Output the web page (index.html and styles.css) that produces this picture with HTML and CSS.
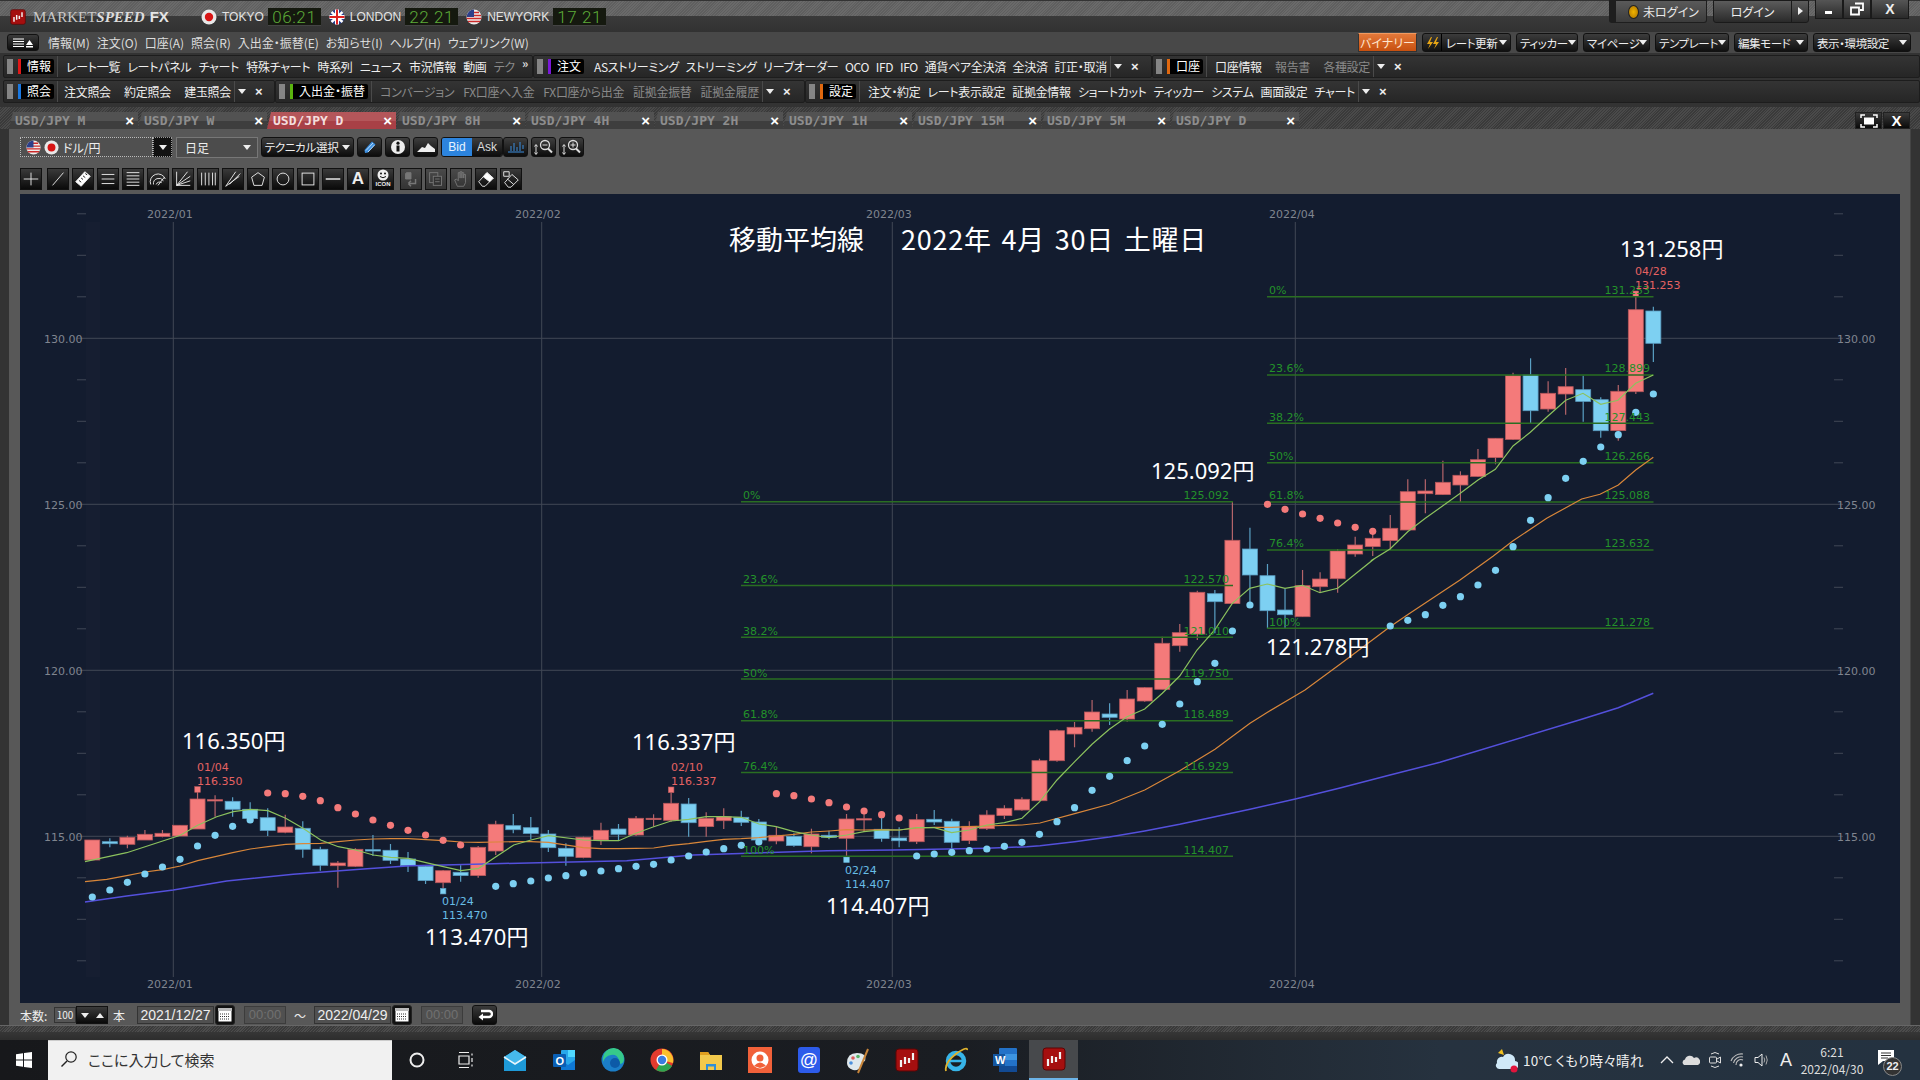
FILE: index.html
```html
<!DOCTYPE html>
<html lang="ja">
<head>
    <meta charset="UTF-8">
    <title>MARKETSPEED FX</title>
    <link rel="stylesheet" href="styles.css">
</head>
<body>
    <svg class="defs" width="0" height="0">
        <symbol id="flag-jp" viewBox="0 0 16 16"><circle cx="8" cy="8" r="7.5" fill="#e8e8e8"/><circle cx="8" cy="8" r="4.2" fill="#d81414"/></symbol>
        <symbol id="flag-uk" viewBox="0 0 16 16"><circle cx="8" cy="8" r="7.5" fill="#27408f"/><path d="M2.5 3L13.5 13M13.5 3L2.5 13" stroke="#fff" stroke-width="2.4"/><path d="M8 0.5V15.5M0.5 8H15.5" stroke="#fff" stroke-width="4"/><path d="M8 0.5V15.5M0.5 8H15.5" stroke="#d22" stroke-width="2"/></symbol>
        <symbol id="flag-us" viewBox="0 0 16 16"><circle cx="8" cy="8" r="7.5" fill="#eee"/><path d="M3 3.5H13M1 6.5H15M0.7 9.5H15.3M2 12.5H14" stroke="#cc2a2a" stroke-width="1.5"/><path d="M8 0.5A7.5 7.5 0 0 0 0.7 8H8Z" fill="#2c3f8a"/></symbol>
        <symbol id="app-logo" viewBox="0 0 24 24"><rect x="1" y="1" width="22" height="22" rx="3" fill="#a50f0f" stroke="#5c0505"/><path d="M6 12V19M10 9V16M14 10V15M18 5V12" stroke="#f2f2f2" stroke-width="2.2"/></symbol>
    </svg>

    <div class="app">
        <header class="titlebar">
            <svg class="brand-logo"><use href="#app-logo"/></svg>
            <div class="brand"><span class="brand-a">MARKET</span><span class="brand-b">SPEED</span><span class="brand-c">FX</span></div>
            <svg class="city-flag first-city"><use href="#flag-jp"/></svg>
            <span class="city">TOKYO</span>
            <span class="clock">06:21</span>
            <svg class="city-flag"><use href="#flag-uk"/></svg>
            <span class="city">LONDON</span>
            <span class="clock">22 21</span>
            <svg class="city-flag"><use href="#flag-us"/></svg>
            <span class="city">NEWYORK</span>
            <span class="clock">17 21</span>

            <div class="title-right">
                <div class="login-state"><span class="lamp"></span>未ログイン</div>
                <div class="login-btn"><span>ログイン</span><i class="login-arrow"></i></div>
                <div class="win-btns">
                    <div class="win-btn"><svg width="14" height="14"><rect x="3" y="9" width="7" height="3" fill="#fff"/></svg></div>
                    <div class="win-btn"><svg width="16" height="14"><path d="M6 1.5H14V8H11M2 5.5H10V12.5H2Z" fill="none" stroke="#fff" stroke-width="1.8"/></svg></div>
                    <div class="win-btn win-close">X</div>
                </div>
            </div>
        </header>

        <nav class="menubar">
            <div class="menu-toggle">
                <svg width="24" height="14"><path d="M2 3H13M2 5.5H13M2 8H13M2 10.5H13" stroke="#fff"/><path d="M15 9L18.5 4L22 9Z M15 10H22V11.5H15Z" fill="#fff"/></svg>
            </div>
            <div class="menu-items">
                <span>情報(M)</span><span>注文(O)</span><span>口座(A)</span><span>照会(R)</span><span>入出金・振替(E)</span><span>お知らせ(I)</span><span>ヘルプ(H)</span><span>ウェブリンク(W)</span>
            </div>
            <div class="menu-right">
                <div class="binary-btn">バイナリー</div>
                <div class="drop-btn rate-btn"><span class="bolt">
                    <svg width="16" height="14"><path d="M7 1L3 8H6L4 13L9 6H6L8 1ZM13 1L9 8H12L10 13L15 6H12L14 1Z" fill="#e8a614"/></svg>
                </span>レート更新</div>
                <div class="drop-btn ticker-btn">ティッカー</div>
                <div class="drop-btn page-btn">マイページ</div>
                <div class="drop-btn tmpl-btn">テンプレート</div>
                <div class="drop-btn edit-btn">編集モード</div>
                <div class="drop-btn env-btn">表示・環境設定</div>
            </div>
        </nav>

        <div class="toolrow">
            <div class="toolbar tb-info">
                <i class="grip"></i><b class="tag tag-red">情報</b><i class="sep"></i>
                <div class="tb-items items-info"><span>レート一覧</span><span>レートパネル</span><span>チャート</span><span>特殊チャート</span><span>時系列</span><span>ニュース</span><span>市況情報</span><span>動画</span><span class="off">テク</span></div>
                <span class="more">»</span>
            </div>
            <div class="toolbar tb-order">
                <i class="grip"></i><b class="tag tag-purple">注文</b>
                <div class="tb-items items-order"><span>ASストリーミング</span><span>ストリーミング</span><span>リーブオーダー</span><span>OCO</span><span>IFD</span><span>IFO</span><span>通貨ペア全決済</span><span>全決済</span><span>訂正・取消</span></div>
                <i class="sep"></i><i class="caret"></i><span class="x">×</span>
            </div>
            <div class="toolbar tb-grow">
                <i class="grip"></i><b class="tag tag-orange">口座</b><i class="sep"></i>
                <div class="tb-items items-acct"><span>口座情報</span><span class="off">報告書</span><span class="off">各種設定</span></div>
                <i class="sep"></i><i class="caret"></i><span class="x">×</span>
            </div>
        </div>

        <div class="toolrow">
            <div class="toolbar tb-inquiry">
                <i class="grip"></i><b class="tag tag-blue">照会</b><i class="sep"></i>
                <div class="tb-items items-inquiry"><span>注文照会</span><span>約定照会</span><span>建玉照会</span></div>
                <i class="sep"></i><i class="caret"></i><span class="x">×</span>
            </div>
            <div class="toolbar tb-deposit">
                <i class="grip"></i><b class="tag tag-green">入出金・振替</b><i class="sep"></i>
                <div class="tb-items items-deposit off"><span>コンバージョン</span><span>FX口座へ入金</span><span>FX口座から出金</span><span>証拠金振替</span><span>証拠金履歴</span></div>
                <i class="sep"></i><i class="caret"></i><span class="x">×</span>
            </div>
            <div class="toolbar tb-grow">
                <i class="grip"></i><b class="tag tag-orange">設定</b><i class="sep"></i>
                <div class="tb-items items-setting"><span>注文・約定</span><span>レート表示設定</span><span>証拠金情報</span><span>ショートカット</span><span>ティッカー</span><span>システム</span><span>画面設定</span><span>チャート</span></div>
                <i class="sep"></i><i class="caret"></i><span class="x">×</span>
            </div>
        </div>

        <div class="tabstrip">
            <div class="tab"><span>USD/JPY M</span><b>×</b></div>
            <div class="tab"><span>USD/JPY W</span><b>×</b></div>
            <div class="tab tab-active"><span>USD/JPY D</span><b>×</b></div>
            <div class="tab"><span>USD/JPY 8H</span><b>×</b></div>
            <div class="tab"><span>USD/JPY 4H</span><b>×</b></div>
            <div class="tab"><span>USD/JPY 2H</span><b>×</b></div>
            <div class="tab"><span>USD/JPY 1H</span><b>×</b></div>
            <div class="tab"><span>USD/JPY 15M</span><b>×</b></div>
            <div class="tab"><span>USD/JPY 5M</span><b>×</b></div>
            <div class="tab"><span>USD/JPY D</span><b>×</b></div>
            <div class="strip-btns">
                <div class="strip-btn"><svg width="18" height="14"><path d="M1 4V1H5M13 1H17V4M17 10V13H13M5 13H1V10" fill="none" stroke="#fff" stroke-width="1.5"/><rect x="4" y="3.5" width="10" height="7" fill="#fff"/></svg></div>
                <div class="strip-btn strip-close">X</div>
            </div>
        </div>

        <main class="panel">
            <div class="chart-controls">
                <div class="pair-select">
                    <svg class="pair-flag"><use href="#flag-us"/></svg><svg class="pair-flag"><use href="#flag-jp"/></svg>
                    <span>ドル/円</span>
                </div>
                <div class="pair-drop"><i class="caret"></i></div>
                <div class="span-select"><span>日足</span><i class="caret"></i></div>
                <div class="ctrl-btn tech-btn">テクニカル選択<i class="caret"></i></div>
                <div class="ctrl-btn icon-btn"><svg width="18" height="16"><path d="M4 14L3.5 11L11 2.5L14.5 5.5L7 13.5Z" fill="#3d8fe0"/><path d="M5 11.5L12 4M7 13L13.5 6" stroke="#bcdcf5"/></svg></div>
                <div class="ctrl-btn icon-btn"><svg width="16" height="16"><circle cx="8" cy="8" r="7" fill="#eee"/><rect x="6.5" y="6.5" width="3" height="6" fill="#111"/><circle cx="8" cy="4.2" r="1.6" fill="#111"/></svg></div>
                <div class="ctrl-btn icon-btn"><svg width="20" height="14"><path d="M1 12L6 7L9 8L12 3L15 6L19 9V12Z" fill="#eee"/></svg></div>
                <div class="bidask"><span class="bid">Bid</span><span class="ask">Ask</span></div>
                <div class="ctrl-btn icon-btn chart-type"><svg width="18" height="14"><path d="M1 12H17M4 11V6M7 11V3M10 11V7M13 11V2M16 9V5" stroke="#3d8fe0"/></svg></div>
                <div class="ctrl-btn icon-btn"><svg width="22" height="18"><path d="M3 7V16M1.5 8.5L3 6.5L4.5 8.5M1.5 14.5L3 16.5L4.5 14.5" stroke="#ddd" fill="none"/><circle cx="12" cy="7" r="4.5" fill="none" stroke="#ddd" stroke-width="1.3"/><path d="M15 10.5L19 14.5" stroke="#ddd" stroke-width="2"/><path d="M9.5 7H14.5" stroke="#ddd"/></svg></div>
                <div class="ctrl-btn icon-btn"><svg width="22" height="18"><path d="M3 7V16M1.5 8.5L3 6.5L4.5 8.5M1.5 14.5L3 16.5L4.5 14.5" stroke="#ddd" fill="none"/><circle cx="12" cy="7" r="4.5" fill="none" stroke="#ddd" stroke-width="1.3"/><path d="M15 10.5L19 14.5" stroke="#ddd" stroke-width="2"/><path d="M9.5 7H14.5M12 4.5V9.5" stroke="#ddd"/></svg></div>
            </div>

            <div class="draw-tools">
                <div class="tool tool-first"><svg class="ico" viewBox="0 0 22 22"><path d="M11 4V18M3 11H19"/></svg></div>
                <div class="tool"><svg class="ico" viewBox="0 0 22 22"><path d="M5 18L17 4"/></svg></div>
                <div class="tool"><svg class="ico" viewBox="0 0 22 22"><path d="M3 14L13 3L19 8L9 19Z" fill="#fff"/><path d="M6.5 12.5L9 14.5M9 10L11 11.5M11 7.5L13.5 9.5M13.5 5L15.5 6.5" stroke="#111"/></svg></div>
                <div class="tool"><svg class="ico" viewBox="0 0 22 22"><path d="M4 6H18M4 11H18M4 16H18"/></svg></div>
                <div class="tool"><svg class="ico" viewBox="0 0 22 22"><path d="M4 4H18M4 7.5H18M4 11H18M4 14.5H18M4 18H18"/></svg></div>
                <div class="tool"><svg class="ico" viewBox="0 0 22 22"><path d="M3 17A8 8 0 0 1 19 11M6 17A6 6 0 0 1 17 13M9 17A4 4 0 0 1 15 15M11 18L18 9"/></svg></div>
                <div class="tool"><svg class="ico" viewBox="0 0 22 22"><path d="M4 3V18H19M4 18L16 3M4 18L19 8M4 18L19 13"/></svg></div>
                <div class="tool"><svg class="ico" viewBox="0 0 22 22"><path d="M4 4V18M8 4V18M12 4V18M16 4V18M19 4V18"/></svg></div>
                <div class="tool"><svg class="ico" viewBox="0 0 22 22"><path d="M3 19L14 3M3 19L18 8M7 17L19 5"/></svg></div>
                <div class="tool"><svg class="ico" viewBox="0 0 22 22"><path d="M11 4L18 9L15.5 18H6.5L4 9Z"/></svg></div>
                <div class="tool"><svg class="ico" viewBox="0 0 22 22"><circle cx="11" cy="11" r="6.5"/></svg></div>
                <div class="tool"><svg class="ico" viewBox="0 0 22 22"><rect x="4.5" y="4.5" width="13" height="13"/></svg></div>
                <div class="tool"><svg class="ico" viewBox="0 0 22 22"><path d="M3 11H19" stroke-width="1.6"/></svg></div>
                <div class="tool tool-letter">A</div>
                <div class="tool tool-smile"><svg width="14" height="12" viewBox="0 0 14 12"><circle cx="7" cy="6" r="5.5" fill="#eee"/><circle cx="5" cy="4.5" r="1" fill="#111"/><circle cx="9" cy="4.5" r="1" fill="#111"/><path d="M4 7.5Q7 10 10 7.5" stroke="#111" fill="none"/></svg><span>ICON</span></div>
                <div class="tool tool-gap tool-off"><svg class="ico" viewBox="0 0 22 22"><path d="M6 4H11V11H5V5Z" fill="#777"/><path d="M16 11V16H8M8 16L11 13M8 16L11 19" stroke="#777" stroke-width="1.6"/></svg></div>
                <div class="tool tool-off"><svg class="ico" viewBox="0 0 22 22"><rect x="4" y="4" width="9" height="11"/><rect x="8" y="8" width="9" height="10" fill="#333"/><path d="M10 11H15M10 14H15"/></svg></div>
                <div class="tool tool-off"><svg class="ico" viewBox="0 0 22 22"><path d="M7 19L4 12L6 11L8 13V4H10V10V3H12V10V4H14V10V6H16V15L14 19Z"/></svg></div>
                <div class="tool"><svg class="ico" viewBox="0 0 22 22"><path d="M3 14L12 4L19 10L10 19H7Z"/><path d="M12 4L19 10L15 14L8 8.5Z" fill="#fff"/></svg></div>
                <div class="tool"><svg class="ico" viewBox="0 0 22 22"><path d="M4 15L12 6L19 12L11 20H8Z"/><path d="M3 3H9V8H3Z"/><path d="M7 11L14 17"/></svg></div>
            </div>

            <div class="plot">
                <svg class="chart" width="1880" height="809" viewBox="20 194 1880 809">
                    <rect class="axis-band" x="86" y="222" width="14" height="755"/>
                    <g id="grid"></g>

                    <g class="axis-text">
                        <text x="44" y="343">130.00</text><text x="44" y="509">125.00</text><text x="44" y="675">120.00</text><text x="44" y="841">115.00</text>
                        <text x="1837" y="343">130.00</text><text x="1837" y="509">125.00</text><text x="1837" y="675">120.00</text><text x="1837" y="841">115.00</text>
                        <text x="147" y="218">2022/01</text><text x="515" y="218">2022/02</text><text x="866" y="218">2022/03</text><text x="1269" y="218">2022/04</text>
                        <text x="147" y="988">2022/01</text><text x="515" y="988">2022/02</text><text x="866" y="988">2022/03</text><text x="1269" y="988">2022/04</text>
                    </g>

                    <g id="candles"></g>

                    <g class="fib-lines">
                        <path d="M741 501.7H1233M741 585.4H1233M741 637.2H1233M741 679H1233M741 720.8H1233M741 772.6H1233M741 856.3H1233"/>
                        <path d="M1267 296.7H1653.5M1267 375H1653.5M1267 423.3H1653.5M1267 462.7H1653.5M1267 502H1653.5M1267 550H1653.5M1267 628.3H1653.5"/>
                    </g>

                    <g id="averages"></g>
                    <g id="sar"></g>

                    <g class="fib-text">
                        <text x="743" y="499">0%</text><text x="743" y="583">23.6%</text><text x="743" y="635">38.2%</text><text x="743" y="677">50%</text><text x="743" y="718">61.8%</text><text x="743" y="770">76.4%</text><text x="743" y="854">100%</text>
                        <text x="1269" y="294">0%</text><text x="1269" y="372">23.6%</text><text x="1269" y="421">38.2%</text><text x="1269" y="460">50%</text><text x="1269" y="499">61.8%</text><text x="1269" y="547">76.4%</text><text x="1269" y="626">100%</text>
                    </g>
                    <g class="fib-text fib-end">
                        <text x="1229" y="499">125.092</text><text x="1229" y="583">122.570</text><text x="1229" y="635">121.010</text><text x="1229" y="677">119.750</text><text x="1229" y="718">118.489</text><text x="1229" y="770">116.929</text><text x="1229" y="854">114.407</text>
                        <text x="1650" y="294">131.253</text><text x="1650" y="372">128.899</text><text x="1650" y="421">127.443</text><text x="1650" y="460">126.266</text><text x="1650" y="499">125.088</text><text x="1650" y="547">123.632</text><text x="1650" y="626">121.278</text>
                    </g>

                    <g class="peak-text">
                        <text x="197" y="771">01/04</text><text x="197" y="785">116.350</text>
                        <text x="671" y="771">02/10</text><text x="671" y="785">116.337</text>
                        <text x="1635" y="275">04/28</text><text x="1635" y="289">131.253</text>
                    </g>
                    <g class="low-text">
                        <text x="442" y="905">01/24</text><text x="442" y="919">113.470</text>
                        <text x="845" y="874">02/24</text><text x="845" y="888">114.407</text>
                    </g>

                    <g class="note-text">
                        <text x="182" y="749">116.350円</text>
                        <text x="632" y="750">116.337円</text>
                        <text x="425" y="945">113.470円</text>
                        <text x="826" y="914">114.407円</text>
                        <text x="1151" y="479">125.092円</text>
                        <text x="1266" y="655">121.278円</text>
                        <text x="1620" y="257">131.258円</text>
                    </g>

                    <g class="title-text">
                        <text x="729" y="250">移動平均線</text>
                        <text class="title-date" x="901" y="250">2022年 4月 30日 土曜日</text>
                    </g>
                </svg>
            </div>

            <div class="range-bar">
                <span class="range-label">本数:</span>
                <div class="count-field">100</div>
                <div class="spin"><i class="caret"></i><i class="caret caret-up"></i></div>
                <span class="range-unit">本</span>
                <div class="date-field">2021/12/27</div>
                <div class="cal-btn"><svg width="14" height="14"><rect x="0.5" y="0.5" width="13" height="13" fill="#fff"/><rect y="0" width="14" height="3" fill="#bbb"/><path d="M2 6H12M2 8.5H12M2 11H12" stroke="#333" stroke-dasharray="1 1"/></svg></div>
                <div class="time-field">00:00</div>
                <span class="range-tilde">～</span>
                <div class="date-field">2022/04/29</div>
                <div class="cal-btn"><svg width="14" height="14"><rect x="0.5" y="0.5" width="13" height="13" fill="#fff"/><rect y="0" width="14" height="3" fill="#bbb"/><path d="M2 6H12M2 8.5H12M2 11H12" stroke="#333" stroke-dasharray="1 1"/></svg></div>
                <div class="time-field time-end">00:00</div>
                <div class="back-btn"><svg width="16" height="14"><path d="M4 3H12A2.5 2.5 0 0 1 12 9H4" fill="none" stroke="#fff" stroke-width="2.4"/><path d="M6 5.5L1.5 9L6 12.5Z" fill="#fff"/></svg></div>
            </div>
        </main>
        <div class="app-foot"></div>

        <footer class="taskbar">
            <div class="start"><svg width="16" height="16"><path d="M0 2.3L7 1.3V7.5H0ZM8 1.1L16 0V7.5H8ZM0 8.5H7V14.7L0 13.7ZM8 8.5H16V16L8 14.9Z" fill="#fff"/></svg></div>
            <div class="search">
                <svg width="18" height="18"><circle cx="11" cy="7" r="5.2" fill="none" stroke="#222" stroke-width="1.2"/><path d="M7 11L1.5 16.5" stroke="#222" stroke-width="1.4"/></svg>
                <span>ここに入力して検索</span>
            </div>
            <div class="task-icon"><svg width="16" height="16"><circle cx="8" cy="8" r="6.5" fill="none" stroke="#eee" stroke-width="2"/></svg></div>
            <div class="task-icon"><svg width="18" height="18"><path d="M2 1.5H12M2 16.5H12M2 5H12V13H2ZM15 2.5V4.5M15 7V11M15 13.5V15.5" fill="none" stroke="#eee" stroke-width="1.2"/></svg></div>
            <div class="task-icon"><svg width="26" height="26"><path d="M2 10L13 3L24 10V24H2Z" fill="#1e9ad8"/><path d="M2 10L13 17L24 10L13 3Z" fill="#46b9ec"/><path d="M2 10L13 17L24 10" fill="none" stroke="#e8f6fd" stroke-width="1.5"/></svg></div>
            <div class="task-icon"><svg width="26" height="26"><rect x="10" y="3" width="14" height="20" rx="1" fill="#28a8ea"/><path d="M17 3H24V10H17Z" fill="#50d9ff"/><path d="M10 13L17 18L24 13V23H10Z" fill="#0f78d4"/><rect x="2" y="7" width="13" height="13" rx="1" fill="#0a5fb4"/><text class="task-letter" x="4.5" y="17.5">O</text></svg></div>
            <div class="task-icon"><svg width="26" height="26"><circle cx="13" cy="13" r="11.5" fill="#1b7ec8"/><path d="M3 11A10.500 10.500 0 0 1 24 12Q24 17 19 17H12Q14 12 19 13Q17 7 11 8Q5 9 3 15Z" fill="#36c98a"/><circle cx="15" cy="16" r="5" fill="#0d5aa7"/></svg></div>
            <div class="task-icon"><svg width="26" height="26"><circle cx="13" cy="13" r="11.500" fill="#e33b2e"/><path d="M13 13L23 19A11.500 11.500 0 0 1 7 23Z" fill="#2fa44f"/><path d="M13 2A11.500 11.500 0 0 1 24 16L13 13Z" fill="#fbc02d"/><circle cx="13" cy="13" r="5.500" fill="#fff"/><circle cx="13" cy="13" r="4.200" fill="#3b7de0"/></svg></div>
            <div class="task-icon"><svg width="26" height="26"><path d="M2 5H10L12 8H24V23H2Z" fill="#f2c94c"/><path d="M2 5H10L12 8H2Z" fill="#e09f1f"/><path d="M8 17H18V23H16V19.500H10V23H8Z" fill="#2e8fd8"/></svg></div>
            <div class="task-icon"><svg width="24" height="26"><rect width="24" height="26" fill="#f1613a"/><circle cx="12" cy="13" r="8.500" fill="#fff"/><circle cx="12" cy="11" r="3.500" fill="#f1613a"/><path d="M6 19Q12 12 18 19L12 21Z" fill="#f1613a"/></svg></div>
            <div class="task-icon"><svg width="24" height="28"><rect x="1" y="1" width="22" height="26" rx="3" fill="#2d5bea"/><text class="task-at" x="12" y="20">@</text></svg></div>
            <div class="task-icon"><svg width="26" height="28"><path d="M2 17Q2 7 12 7Q22 7 20 15Q16 16 16 20Q14 25 8 24Q2 22 2 17Z" fill="#dfe8ec"/><circle cx="8" cy="12" r="1.800" fill="#d95c5c"/><circle cx="13" cy="10.500" r="1.800" fill="#58b368"/><circle cx="6" cy="17" r="1.800" fill="#4a8fdc"/><path d="M13 27L23 3" stroke="#c8853a" stroke-width="2"/></svg></div>
            <div class="task-icon"><svg width="24" height="28"><use href="#app-logo"/></svg></div>
            <div class="task-icon"><svg width="26" height="28"><circle cx="13" cy="15" r="8" fill="none" stroke="#37b4e8" stroke-width="4.500"/><path d="M6 15H21" stroke="#37b4e8" stroke-width="2.500"/><path d="M3 25Q1 17 14 7Q25 0 24 4" fill="none" stroke="#e0b32e" stroke-width="1.800"/></svg></div>
            <div class="task-icon"><svg width="26" height="28"><rect x="7" y="2" width="18" height="24" rx="1" fill="#2372c8"/><path d="M7 8H25V14H7Z" fill="#3d94e0"/><path d="M7 20H25V26H7Z" fill="#124a93"/><rect x="1" y="8" width="12" height="12" fill="#15569f"/><text class="task-letter" x="3" y="18">W</text></svg></div>
            <div class="task-icon task-active"><svg width="24" height="28"><use href="#app-logo"/></svg></div>

            <div class="tray">
                <svg class="tray-weather" width="24" height="26"><path d="M4 6L8 2L10 8Z" fill="#f0c020"/><path d="M3 16A5 5 0 0 1 9 10A6.500 6.500 0 0 1 21 14A4 4 0 0 1 20 22H6A3.500 3.500 0 0 1 3 16Z" fill="#cfe8f7"/><circle cx="20" cy="22" r="3.500" fill="#e0143c"/></svg>
                <span class="tray-temp">10°C くもり時々晴れ</span>
                <svg class="tray-ico" width="14" height="14"><path d="M1 10L7 4L13 10" fill="none" stroke="#eee" stroke-width="1.300"/></svg>
                <svg class="tray-ico" width="18" height="14"><path d="M2 12A3 3 0 0 1 3 6.500A5 5 0 0 1 12 5A4 4 0 0 1 16 12Z" fill="#ddd"/></svg>
                <svg class="tray-ico" width="14" height="18"><path d="M3 3Q7 0 11 3M3 15Q7 18 11 15" fill="none" stroke="#ddd"/><rect x="1.500" y="6" width="7" height="6" rx="1" fill="none" stroke="#ddd"/><path d="M9 8L12.500 6V12L9 10" fill="none" stroke="#ddd"/></svg>
                <svg class="tray-ico" width="16" height="16"><path d="M1 9A11 11 0 0 1 13 2M3.500 11A8 8 0 0 1 13 5M6 13A5 5 0 0 1 13 8" fill="none" stroke="#bbb" stroke-width="1.100"/><circle cx="11" cy="13" r="1.600" fill="#eee"/></svg>
                <svg class="tray-ico" width="16" height="16"><path d="M1 5.500H4L8 2V14L4 10.500H1Z" fill="none" stroke="#eee"/><path d="M10 5.500Q11.500 8 10 10.500M12 3.500Q14.500 8 12 12.500" fill="none" stroke="#aaa"/></svg>
                <span class="ime">A</span>
                <div class="tray-clock"><span>6:21</span><span>2022/04/30</span></div>
                <div class="notify">
                    <svg width="16" height="15"><path d="M0 0H16V11H5L0 15Z" fill="#fff"/><path d="M3 3H13M3 5.500H13M3 8H10" stroke="#333"/></svg>
                    <span class="badge">22</span>
                </div>
            </div>
        </footer>
    </div>

    <script src="chart.js"></script>
</body>
</html>
```
FILE: styles.css
```css
* {
    box-sizing: border-box;
}

body {
    margin: 0;
    width: 1920px;
    height: 1080px;
    overflow: hidden;
    background: #333;
    color: #eee;
    font-family: "Noto Sans CJK JP", "Liberation Sans", sans-serif;
    font-size: 12px;
    font-feature-settings: "palt";
}

.defs {
    position: absolute;
}

.app {
    display: flex;
    flex-direction: column;
    height: 1080px;
}

/* title bar */
.titlebar {
    display: flex;
    align-items: center;
    height: 32px;
    flex: none;
    padding-left: 10px;
    background:
        linear-gradient(#3a3a3a, #323232) 0 16px / 100% 16px no-repeat,
        repeating-linear-gradient(135deg, #5f5f5f 0 1px, #6a6a6a 1px 2px);
    box-shadow: inset 0 1px 0 #333;
}

.brand-logo {
    width: 16px;
    height: 16px;
    margin-top: 2px;
}

.brand {
    display: flex;
    align-items: baseline;
    margin-left: 7px;
    margin-top: 2px;
    width: 168px;
    font-family: "Liberation Serif", serif;
    font-size: 15px;
    color: #c9c9c9;
}

.brand-b {
    font-style: italic;
    font-weight: 700;
    color: #ddd;
}

.brand-c {
    margin-left: 5px;
    font-family: "Liberation Sans", sans-serif;
    font-weight: 700;
    color: #e6e6e6;
}

.city-flag {
    width: 16px;
    height: 16px;
    margin: 2px 5px 0 8px;
    flex: none;
}

.first-city {
    margin-left: 0;
}

.city {
    margin-top: 2px;
    margin-right: 4px;
    font-family: "Liberation Sans", sans-serif;
    font-size: 12px;
    color: #e4e4e4;
}

.clock {
    display: block;
    width: 53px;
    height: 18px;
    margin-top: 2px;
    background: #15190f;
    border-bottom: 1px solid #444;
    color: #5dab38;
    font-family: Roboto, sans-serif;
    font-weight: 300;
    font-size: 17px;
    line-height: 18px;
    letter-spacing: 0.6px;
    text-align: center;
}

.title-right {
    display: flex;
    margin-left: auto;
    padding-right: 11px;
    align-self: flex-start;
}

.login-state {
    display: flex;
    align-items: center;
    width: 98px;
    height: 23px;
    padding-left: 12px;
    background: linear-gradient(#5a5a5a, #3c3c3c);
    border: 1px solid #1e1e1e;
    border-left-width: 7px;
    border-radius: 0 0 3px 3px;
    color: #e8e8e8;
}

.lamp {
    width: 11px;
    height: 14px;
    margin-right: 4px;
    border-radius: 50%;
    background: radial-gradient(#f0b400, #a87000);
    border: 1px solid #222;
}

.login-btn {
    display: flex;
    width: 96px;
    height: 23px;
    margin-left: 6px;
    background: linear-gradient(#5c5c5c, #2a2a2a);
    border: 1px solid #1a1a1a;
    border-radius: 0 0 3px 3px;
    color: #eee;
}

.login-btn span {
    flex: 1;
    line-height: 21px;
    text-align: center;
}

.login-arrow {
    width: 17px;
    position: relative;
    border-left: 1px solid #1a1a1a;
}

.login-arrow::after {
    content: "";
    position: absolute;
    left: 6px;
    top: 6px;
    border: 4.5px solid transparent;
    border-left: 5px solid #eee;
    border-right: 0;
}

.win-btns {
    display: flex;
    margin-left: 6px;
}

.win-btn {
    display: flex;
    align-items: center;
    justify-content: center;
    width: 28px;
    height: 19px;
    background: linear-gradient(#555, #2a2a2a);
    border: 1px solid #1a1a1a;
    border-top: 0;
    color: #eee;
    font-family: "Liberation Sans", sans-serif;
    font-weight: 700;
    font-size: 14px;
}

.win-close {
    width: 38px;
}

/* menu */
.menubar {
    display: flex;
    align-items: center;
    height: 21px;
    flex: none;
    padding-left: 7px;
    padding-right: 9px;
    background: #484848;
    color: #ddd;
}

.menu-toggle {
    display: flex;
    align-items: center;
    justify-content: center;
    width: 32px;
    height: 17px;
    background: linear-gradient(#3a3a3a, #0c0c0c);
    border: 1px solid #111;
    border-radius: 3px;
}

.menu-items {
    display: flex;
    justify-content: space-between;
    width: 481px;
    margin-left: 9px;
}

.menu-right {
    display: flex;
    margin-left: auto;
    gap: 5px;
}

.binary-btn {
    width: 59px;
    height: 19px;
    line-height: 17px;
    text-align: center;
    background: linear-gradient(#e2783a, #c8500f);
    border: 1px solid #333;
    border-top-color: #f09a60;
    color: #ffe6cf;
}

.drop-btn {
    display: flex;
    align-items: center;
    height: 19px;
    padding-left: 3px;
    background: linear-gradient(#3c3c3c, #101010);
    border: 1px solid #111;
    border-radius: 3px;
    color: #eee;
    font-size: 11.5px;
    letter-spacing: -0.4px;
    white-space: nowrap;
}

.drop-btn::after {
    content: "";
    margin-left: auto;
    margin-right: 3px;
    border: 4px solid transparent;
    border-top: 5px solid #eee;
    border-bottom: 0;
}

.rate-btn { width: 89px; padding-left: 0; }
.ticker-btn { width: 62px; }
.page-btn { width: 67px; }
.tmpl-btn { width: 74px; }
.edit-btn { width: 74px; }
.env-btn { width: 98px; }

.bolt {
    display: flex;
    align-items: center;
    justify-content: center;
    width: 19px;
    height: 17px;
    margin-right: 4px;
    border-right: 1px solid #000;
}

/* tool rows */
.toolrow {
    display: flex;
    height: 23px;
    flex: none;
    margin-top: 2px;
    padding-left: 3px;
}

.toolbar {
    display: flex;
    align-items: center;
    flex: none;
    padding-left: 3px;
    background: linear-gradient(#343434, #262626);
    border: 1px solid #1d1d1d;
    border-radius: 2px;
    color: #eee;
}

.tb-info { width: 530px; }
.tb-order { width: 619px; }
.tb-inquiry { width: 272px; }
.tb-deposit { width: 530px; }
.tb-grow { flex: 1; }

.grip {
    width: 6px;
    height: 15px;
    margin-right: 5px;
    flex: none;
    background: radial-gradient(circle at 1px 1px, #888 0.7px, transparent 0.9px) 0 0 / 2px 2px;
}

.tag {
    flex: none;
    height: 15px;
    padding: 0 3px 0 6px;
    line-height: 14px;
    font-weight: 400;
    background: #000;
    border-radius: 0 2px 2px 0;
    color: #fff;
    border-left: 3px solid;
}

.tag-red { border-color: #e01818; }
.tag-purple { border-color: #7a18d8; }
.tag-orange { border-color: #e0680f; }
.tag-blue { border-color: #1a78e0; }
.tag-green { border-color: #5ab40f; }

.sep {
    width: 1px;
    height: 21px;
    margin: 0 3px;
    background: #4a4a4a;
    flex: none;
}

.tb-items {
    display: flex;
    justify-content: space-between;
    flex: none;
    margin-left: 5px;
    white-space: nowrap;
    letter-spacing: -0.3px;
}

.tb-items .off,
.tb-items.off {
    color: #8a8a8a;
}

.items-info { width: 449px; }
.items-order { width: 513px; margin-left: 10px; }
.items-acct { width: 155px; }
.items-inquiry { width: 167px; margin-left: 3px; }
.items-deposit { width: 379px; }
.items-setting { width: 487px; }

.more {
    margin: -8px 0 0 7px;
    font-size: 12px;
    font-weight: 700;
    color: #ddd;
}

.caret {
    display: inline-block;
    flex: none;
    border: 4px solid transparent;
    border-top: 5px solid #eee;
    border-bottom: 0;
}

.x {
    margin-left: 9px;
    font-family: "Liberation Sans", sans-serif;
    font-weight: 700;
    font-size: 13px;
    line-height: 1;
}

/* tabs */
.tabstrip {
    display: flex;
    align-items: flex-end;
    height: 26px;
    flex: none;
    padding: 0 10px 0 9px;
    background:
        linear-gradient(#333, #333) 0 0 / 100% 4px no-repeat,
        repeating-linear-gradient(135deg, #3a3a3a 0 1px, #4a4a4a 1px 2px);
}

.tab {
    display: flex;
    align-items: center;
    width: 129px;
    height: 17px;
    flex: none;
    padding: 0 4px 0 6px;
    background: linear-gradient(#525252 0 50%, #3e3e3e 50%);
    clip-path: polygon(4px 0, 100% 0, 100% 100%, 0 100%);
    color: #8e8e8e;
    font-family: "DejaVu Sans Mono", monospace;
    font-size: 13px;
    font-weight: 700;
}

.tab b {
    margin-left: auto;
    color: #fff;
    font-family: "Liberation Sans", sans-serif;
    font-size: 15px;
    line-height: 1;
}

.tab-active {
    background: linear-gradient(#b4565a 0 50%, #a84046 50%);
    color: #f4dede;
}

.strip-btns {
    display: flex;
    margin-left: auto;
    gap: 1px;
}

.strip-btn {
    display: flex;
    align-items: center;
    justify-content: center;
    width: 27px;
    height: 17px;
    background: linear-gradient(#3a3a3a, #0a0a0a);
    border: 1px solid #222;
    color: #fff;
}

.strip-close {
    font-family: "Liberation Sans", sans-serif;
    font-weight: 700;
    font-size: 15px;
}

/* chart panel */
.panel {
    display: flex;
    flex-direction: column;
    flex: none;
    height: 896px;
    margin: 0 9px;
    padding: 8px 10px 0 11px;
    background: #585858;
    border-right: 1px solid #444;
}

.chart-controls {
    display: flex;
    align-items: center;
    height: 20px;
    flex: none;
}

.pair-select {
    display: flex;
    align-items: center;
    width: 133px;
    height: 20px;
    padding-left: 5px;
    background: #505050;
    border: 1px dotted #bbb;
    color: #eee;
    font-size: 12px;
}

.pair-flag {
    width: 15px;
    height: 15px;
    margin-right: 3px;
}

.pair-flag + .pair-flag {
    margin-right: 4px;
}

.pair-drop {
    display: flex;
    align-items: center;
    justify-content: center;
    width: 19px;
    height: 20px;
    background: #111;
    border: 1px dotted #999;
}

.span-select {
    display: flex;
    align-items: center;
    justify-content: space-between;
    width: 82px;
    height: 21px;
    margin-left: 4px;
    padding: 0 6px 0 8px;
    background: #4c4c4c;
    border: 1px solid #777;
}

.ctrl-btn {
    display: flex;
    align-items: center;
    justify-content: center;
    height: 20px;
    background: linear-gradient(#3e3e3e, #0c0c0c);
    border: 1px solid #111;
    border-radius: 3px;
    color: #eee;
}

.tech-btn {
    width: 93px;
    margin-left: 3px;
    gap: 4px;
    font-size: 11.5px;
    letter-spacing: -0.3px;
    white-space: nowrap;
}

.icon-btn {
    width: 25px;
    margin-left: 3px;
}

.bidask {
    display: flex;
    width: 62px;
    height: 20px;
    margin-left: 3px;
    font-family: "Liberation Sans", sans-serif;
    border: 1px solid #111;
    border-radius: 3px;
    overflow: hidden;
    line-height: 18px;
    text-align: center;
}

.bid {
    flex: 1;
    background: #2c84de;
    color: #e8f4ff;
}

.ask {
    flex: 1;
    background: linear-gradient(#3e3e3e, #0c0c0c);
    color: #ddd;
}

.chart-type {
    margin-left: 0;
}

.draw-tools {
    display: flex;
    align-items: center;
    gap: 3px;
    height: 23px;
    flex: none;
    margin-top: 10px;
}

.tool {
    display: flex;
    flex-direction: column;
    align-items: center;
    justify-content: center;
    width: 22px;
    height: 22px;
    background: linear-gradient(#3a3a3a, #0a0a0a);
    border: 1px solid #111;
    color: #eee;
}

.tool-first {
    margin-right: 2px;
}

.tool-gap {
    margin-left: 3px;
}

.tool-off {
    background: linear-gradient(#4a4a4a, #333);
    color: #777;
}

.ico {
    width: 20px;
    height: 20px;
    fill: none;
    stroke: currentColor;
}

.tool-letter {
    font-family: "Liberation Sans", sans-serif;
    font-size: 17px;
    font-weight: 700;
}

.tool-smile span {
    font-family: "Liberation Sans", sans-serif;
    font-size: 6px;
    font-weight: 700;
    line-height: 7px;
}

.plot {
    flex: none;
    width: 1880px;
    height: 809px;
    margin-top: 4px;
    background: #131c2f;
}

.chart {
    display: block;
    font-family: "DejaVu Sans", sans-serif;
    font-size: 11px;
}

.axis-band { fill: #161e31; }
.axis-text { fill: #80858f; }
.grid-line { stroke: #414856; stroke-width: 1; fill: none; }

.fib-lines path {
    fill: none;
    stroke: #2a6e22;
    stroke-width: 1.5;
}

.fib-text { fill: #23922a; }
.fib-end { text-anchor: end; }
.peak-text { fill: #e56262; }
.low-text { fill: #68bde6; }

.note-text {
    fill: #fff;
    font-family: "Noto Sans", "Noto Sans CJK JP", sans-serif;
    font-size: 22px;
}

.title-text {
    fill: #fff;
    font-family: "Noto Sans CJK JP", sans-serif;
    font-size: 27px;
}

.title-date {
    letter-spacing: 0.75px;
    word-spacing: 3px;
}

.wick-up { stroke: #b4646a; stroke-width: 1.2; }
.wick-down { stroke: #5aa0c4; stroke-width: 1.2; }
.body-up { fill: #f47a7a; stroke: #b8585c; stroke-width: 0.8; }
.body-down { fill: #7dd0f2; stroke: #5a9cc0; stroke-width: 0.8; }
.mark-up { fill: #f47a7a; stroke: #b8585c; stroke-width: 0.6; }
.mark-down { fill: #7dd0f2; stroke: #5a9cc0; stroke-width: 0.6; }
.dot-up { fill: #f47a7a; }
.dot-down { fill: #7dd0f2; }

.ma { fill: none; stroke-width: 1.2; }
.ma-green { stroke: #8cc25e; }
.ma-orange { stroke: #d9873a; }
.ma-purple { stroke: #5450dc; stroke-width: 1.5; }

/* range row under the chart */
.range-bar {
    display: flex;
    align-items: center;
    height: 22px;
    flex: none;
    padding-top: 2px;
    color: #eee;
}

.range-label {
    width: 34px;
}

.count-field {
    width: 22px;
    height: 16px;
    background: #555;
    border: 1px solid #333;
    font-size: 10px;
    line-height: 14px;
    text-align: center;
}

.spin {
    display: flex;
    align-items: center;
    justify-content: space-around;
    width: 32px;
    height: 18px;
    background: linear-gradient(#3a3a3a, #0a0a0a);
    border: 1px solid #111;
}

.caret-up {
    transform: rotate(180deg);
}

.range-unit {
    margin-left: 5px;
    width: 24px;
}

.date-field {
    width: 77px;
    height: 18px;
    background: #505050;
    border: 1px solid #333;
    font-family: "Liberation Sans", sans-serif;
    font-size: 14px;
    line-height: 16px;
    text-align: center;
}

.cal-btn {
    display: flex;
    align-items: center;
    justify-content: center;
    width: 20px;
    height: 20px;
    margin-left: 1px;
    background: #111;
    border: 1px solid #222;
    border-radius: 3px;
}

.time-field {
    width: 42px;
    height: 18px;
    margin-left: 9px;
    border: 1px solid #3c3c3c;
    background: #505050;
    color: #707070;
    font-family: "Liberation Sans", sans-serif;
    font-size: 13px;
    line-height: 16px;
    text-align: center;
}

.range-tilde {
    width: 28px;
    text-align: center;
}

.time-end {
    margin-left: 9px;
}

.back-btn {
    display: flex;
    align-items: center;
    justify-content: center;
    width: 25px;
    height: 20px;
    margin-left: 9px;
    background: linear-gradient(#3a3a3a, #0a0a0a);
    border: 1px solid #111;
    border-radius: 3px;
}

.app-foot {
    flex: none;
    height: 15px;
    background:
        linear-gradient(#363636, #2c2c2c) 0 6px / 100% 9px no-repeat,
        repeating-linear-gradient(135deg, #3a3a3a 0 1px, #4c4c4c 1px 2px);
    border-top: 1px solid #666;
}

/* windows taskbar */
.taskbar {
    display: flex;
    align-items: center;
    height: 40px;
    flex: none;
    background: linear-gradient(90deg, #17181b, #1a1d22 50%, #26323f 75%, #243240);
}

.start {
    display: flex;
    align-items: center;
    justify-content: center;
    width: 48px;
    height: 40px;
}

.search {
    display: flex;
    align-items: center;
    gap: 10px;
    width: 344px;
    height: 40px;
    padding: 0 0 3px 12px;
    background: #f1f1f1;
    border-top: 1px solid #ccc;
    color: #333;
    font-size: 15px;
}

.task-icon {
    display: flex;
    align-items: center;
    justify-content: center;
    width: 49px;
    height: 40px;
    flex: none;
}

.task-active {
    background: #47494c;
    border-bottom: 2px solid #6db4e8;
}

.task-letter {
    fill: #fff;
    font-family: "Liberation Sans", sans-serif;
    font-weight: 700;
    font-size: 11px;
}

.task-at {
    fill: #fff;
    font-family: "Liberation Sans", sans-serif;
    font-size: 18px;
    text-anchor: middle;
}

.tray {
    display: flex;
    align-items: center;
    margin-left: auto;
    padding-right: 12px;
    color: #eee;
}

.tray-weather {
    margin-right: 5px;
}

.tray-temp {
    width: 137px;
    font-size: 13.5px;
    letter-spacing: 0.2px;
}

.tray-ico {
    margin-right: 8px;
    flex: none;
}

.ime {
    margin-left: 2px;
    width: 16px;
    font-family: "Liberation Sans", sans-serif;
    font-size: 18px;
}

.tray-clock {
    display: flex;
    flex-direction: column;
    align-items: center;
    gap: 2px;
    width: 72px;
    color: #ddd;
    font-size: 12px;
    line-height: 15px;
}

.notify {
    position: relative;
    margin-left: 10px;
    width: 30px;
    height: 24px;
    padding-top: 2px;
}

.badge {
    position: absolute;
    left: 5px;
    top: 9px;
    width: 19px;
    height: 19px;
    border-radius: 50%;
    background: #333;
    border: 1px solid #888;
    font-family: "Liberation Sans", sans-serif;
    font-weight: 700;
    font-size: 11px;
    line-height: 17px;
    text-align: center;
}
```
FILE: chart.js
```js
// x position of the candle number i
const xAt = i => 92.3 + 17.54 * i;

// Candles are noted per stretch as [colour, wick high, body top, body bottom, wick low],
// in thirds of a pixel below the stretch's base line. 'u' is up (red), 'd' is down (blue).
const stretches = [
    { base: 720, first: 0, rows: [
        ['u',360,360,420,420], ['d',355,365,371,382], ['u',347,352,373,385], ['u',330,343,360,360], ['u',330,340,350,352],
        ['u',316,316,348,348], ['u',216,237,327,327], ['u',226,239,243,290], ['d',232,244,268,290], ['d',247,268,296,305],
        ['d',265,293,331,348], ['u',284,321,337,340], ['d',304,325,388,413], ['d',380,388,436,452], ['u',423,429,437,503],
        ['u',385,388,439,440], ['d',345,389,393,408], ['d',372,391,421,432], ['d',396,417,437,456], ['d',437,439,482,492],
        ['u',450,452,488,505], ['d',436,457,467,485], ['u',378,382,467,473], ['u',302,313,393,405], ['d',282,317,329,340],
        ['d',291,323,340,358], ['d',330,342,383,396], ['d',370,385,409,437], ['u',350,352,413,415], ['u',308,331,360,375],
        ['d',312,327,343,360], ['u',288,295,345,348], ['u',283,295,299,320], ['u',218,250,301,305], ['d',234,252,308,350],
        ['u',277,295,320,350], ['u',265,290,302,327], ['d',272,292,307,318], ['d',297,306,360,375], ['u',320,346,363,373],
        ['d',340,349,377,380], ['u',326,342,380,400], ['d',332,346,352,358], ['u',282,297,355,410], ['u',270,296,300,335],
        ['d',292,328,356,365], ['d',322,354,362,382], ['u',282,299,365,372], ['d',270,298,306,315], ['d',296,304,367,385],
        ['u',304,319,362,372], ['u',271,285,326,330], ['u',256,265,287,297], ['u',232,238,270,272], ['u',116,122,242,244],
        ['u',28,32,122,125]
    ] },
    { base: 690, first: 56, rows: [
        ['u',96,112,132,172], ['u',30,66,116,125], ['d',40,72,82,105], ['u',0,27,87,95]
    ] },
    { base: 440, first: 60, rows: [
        ['u',742,743,783,785], ['u',590,610,748,748], ['u',552,578,617,635], ['u',452,457,582,600], ['d',450,461,485,580],
        ['u',185,301,491,491], ['d',263,327,405,490], ['d',372,407,512,565], ['d',447,510,524,565], ['u',390,437,530,530],
        ['u',397,417,440,458], ['u',327,333,416,458], ['u',290,315,342,350], ['u',265,295,320,348], ['u',225,265,302,330]
    ] },
    { base: 220, first: 75, rows: [
        ['u',778,815,930,930], ['u',778,813,821,880], ['u',722,787,824,825], ['u',754,766,795,846], ['u',687,719,769,771],
        ['u',655,655,713,733], ['u',458,467,658,660], ['d',415,465,572,610], ['u',484,520,567,575], ['u',444,500,522,584],
        ['d',467,509,544,605], ['d',532,539,632,653], ['u',495,514,632,662], ['u',230,269,515,522], ['d',260,273,370,426]
    ] }
];

// high and low markers, same notation: [candle, colour, base, top of the square]
const markers = [
    [6,'u',720,200], [33,'u',720,201], [88,'u',220,213], [20,'d',720,505], [43,'d',720,411]
];

// parabolic SAR dots: [colour, first candle, base, values]
const sarRuns = [
    ['d',0,720,[531,510,487,462,441,418,378,346,319,300]],
    ['u',10,720,[219,221,229,242,263,282,300,316,331,345,361,375]],
    ['d',23,720,[499,491,483,474,467,459,453,446,439,433,420,408,396,386,376,366]],
    ['u',39,720,[221,227,237,248,261,273,284,294]],
    ['d',47,720,[408,402,397,392,387,379,367,343,305]],
    ['d',56,690,[353,301,259,212,168,103,42]],
    ['d',63,440,[725,670,573,495]],
    ['u',67,440,[193,208,222,235,249,262,274]],
    ['d',74,480,[438,421,404,376,350,315,271,200,121,53]],
    ['d',84,220,[775,724,681,644,577,522]]
];

// moving averages, each made of pieces [left, top, x, y, x, y ...] in thirds of a pixel
const averages = [
    ['ma-purple', [
        [60,720, 75,546,200,528,340,510,500,483,700,463,900,448,1050,437,1150,435,1300,431,1500,427],
        [560,720, 200,422,400,405,800,392,1000,390,1280,385,1400,380],
        [1040,690, 0,467,104,455,208,441,314,423,419,403,525,380,630,358,766,327,900,294,1050,255,1200,217],
        [1340,480, 725,718,835,683,940,640]
    ]],
    ['ma-orange', [
        [60,720, 75,485,140,478,200,467,255,456,308,449,361,438,413,422,466,410,518,398,571,387,624,380,677,373,729,371,782,370,835,365,887,360,940,357,992,356,1045,356,1098,359,1150,362,1203,366,1256,367,1308,366,1361,365,1413,365,1466,367],
        [560,720, 70,383,123,386,176,386,228,385,281,384,333,376,386,371,439,364,491,358,544,356,597,353,649,348,702,343,754,336,807,333,860,329,912,330,965,329,1018,330,1070,324,1123,322,1175,322,1228,320,1281,318,1333,316,1386,315],
        [1040,690, 0,399,104,371,208,343,314,300,419,242,525,178,630,100,680,68,766,17,795,0],
        [1340,480, 0,553,150,440,205,403,360,300,460,228,518,183,620,115,725,57,780,43,835,15],
        [1240,220, 1187,750,1240,712]
    ]],
    ['ma-green', [
        [60,720, 75,425,200,398,361,346,413,316,470,290,520,275,571,268,624,272,677,295,729,325,782,360,835,380,887,390,940,405,992,412,1045,415,1098,428,1150,440,1203,452,1256,445,1308,410,1361,375,1413,360,1466,347],
        [560,720, 70,360,123,362,176,362,228,340,281,320,333,303,386,298,439,290,491,290,544,292,597,312,649,320,702,335,754,345,807,353,860,345,912,335,965,330,1018,330,1070,323,1123,323,1175,338,1228,330,1281,315,1333,308,1386,295,1439,245],
        [1040,690, 51,270,104,215,156,163,208,118,261,80,314,57],
        [1040,440, 367,760,419,708,471,630,524,570,577,490,629,445,682,432,735,445,787,436,840,458,893,445,945,403,998,360],
        [1340,480, 97,240,150,207,203,155,256,115],
        [1240,220, 661,820,714,780,766,748,819,678,871,637,924,588,977,541,1029,520,1082,553,1134,541,1187,490,1240,465]
    ]]
];

function drawGrid() {
    let d = '';
    [338.3, 504.3, 670.3, 836.3].forEach(y => { d += `M86 ${y}H1834`; });
    [173.3, 541.7, 892.3, 1295.3].forEach(x => { d += `M${x} 222V977`; });
    for (let k = -3; k <= 15; k++) {
        const y = 338.3 + k * 41.5;
        d += `M77 ${y}H86M1834 ${y}H1843`;
    }
    document.getElementById('grid').innerHTML = `<path class="grid-line" d="${d}"/>`;
}

function drawCandles() {
    let html = '';
    stretches.forEach(s => {
        s.rows.forEach((r, n) => {
            const x = xAt(s.first + n);
            const y = v => (s.base + v / 3).toFixed(1);
            const kind = r[0] === 'u' ? 'up' : 'down';
            html += `<line class="wick-${kind}" x1="${x}" x2="${x}" y1="${y(r[1])}" y2="${y(r[4])}"/>`;
            html += `<rect class="body-${kind}" x="${x - 7.5}" width="15" y="${y(r[2])}" height="${((r[3] - r[2]) / 3).toFixed(1)}"/>`;
        });
    });
    markers.forEach(m => {
        const kind = m[1] === 'u' ? 'up' : 'down';
        html += `<rect class="mark-${kind}" x="${xAt(m[0]) - 2.8}" y="${m[2] + m[3] / 3}" width="5.6" height="5.6"/>`;
    });
    document.getElementById('candles').innerHTML = html;
}

function drawAverages() {
    let html = '';
    averages.forEach(([name, pieces]) => {
        const pts = [];
        pieces.forEach(p => {
            for (let k = 2; k < p.length; k += 2) {
                pts.push((p[0] + p[k] / 3).toFixed(1) + ',' + (p[1] + p[k + 1] / 3).toFixed(1));
            }
        });
        html += `<polyline class="ma ${name}" points="${pts.join(' ')}"/>`;
    });
    document.getElementById('averages').innerHTML = html;
}

function drawSar() {
    let html = '';
    sarRuns.forEach(([colour, first, base, values]) => {
        const kind = colour === 'u' ? 'up' : 'down';
        values.forEach((v, n) => {
            html += `<circle class="dot-${kind}" cx="${xAt(first + n)}" cy="${base + v / 3}" r="3.6"/>`;
        });
    });
    document.getElementById('sar').innerHTML = html;
}

drawGrid();
drawCandles();
drawAverages();
drawSar();
```
